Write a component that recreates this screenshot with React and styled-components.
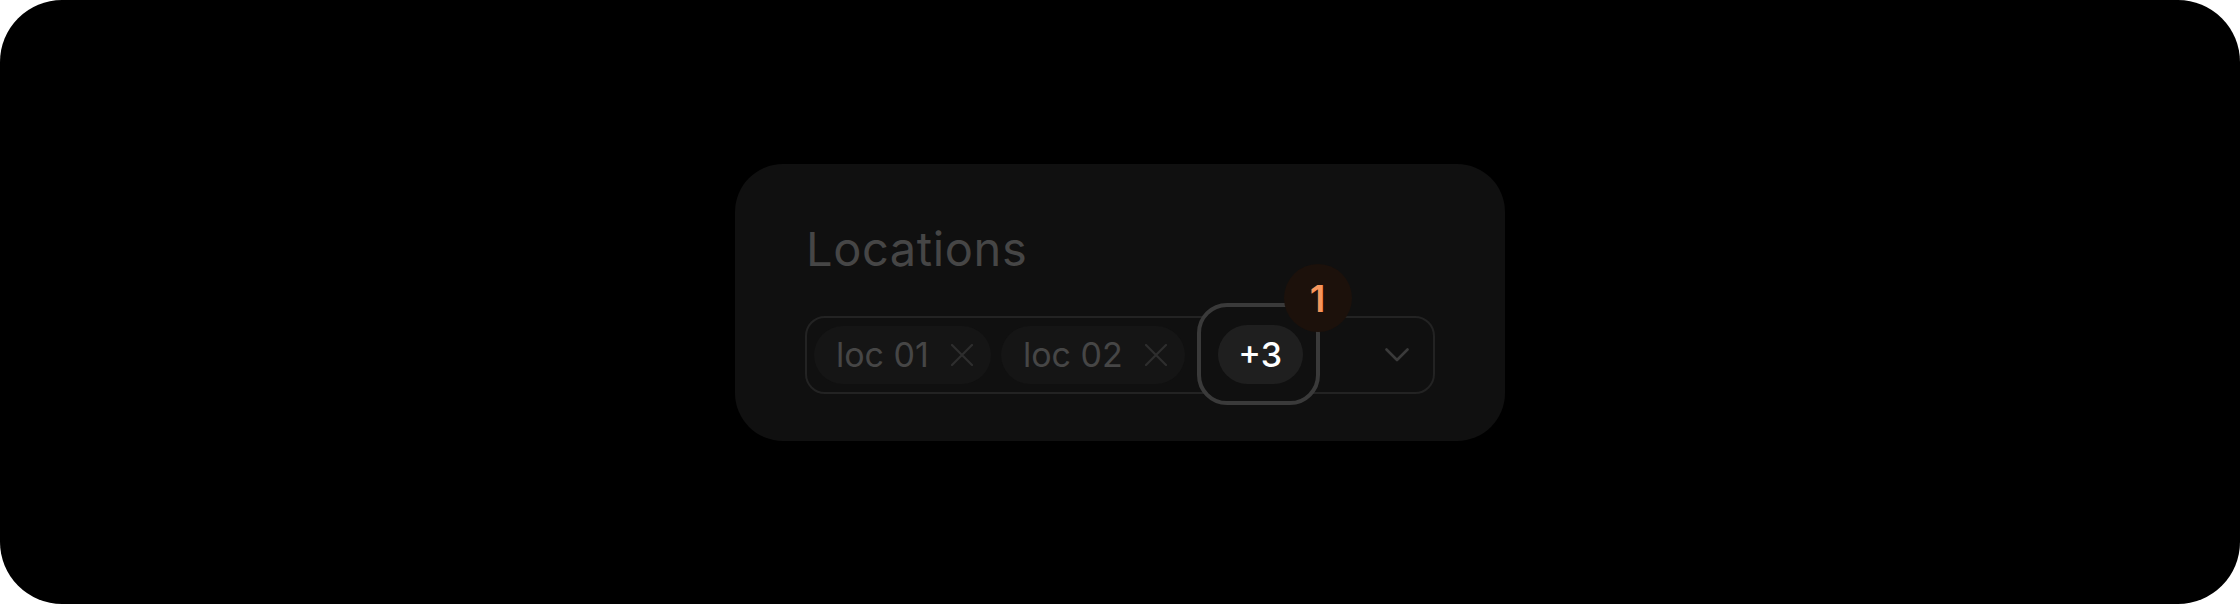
import React from "react";
import styled, { createGlobalStyle } from "styled-components";

const GlobalStyle = createGlobalStyle`
  html, body {
    margin: 0;
    padding: 0;
    background: #ffffff;
  }
  * {
    box-sizing: border-box;
  }
`;

const Frame = styled.div`
  width: 2240px;
  height: 604px;
  background: #000000;
  border-radius: 62px;
  display: flex;
  align-items: center;
  justify-content: center;
  font-family: Inter, "Liberation Sans", sans-serif;
`;

const Card = styled.div`
  width: 770px;
  background: #101010;
  border-radius: 48px;
  padding: 57px 70px 47px 70px;
  display: flex;
  flex-direction: column;
  gap: 40px;
`;

const Title = styled.h2`
  margin: 0 0 0 1px;
  font-size: 47px;
  line-height: 55px;
  font-weight: 400;
  color: #464646;
  letter-spacing: 0.6px;
`;

const Field = styled.div`
  height: 78px;
  border: 2px solid #232323;
  border-radius: 20px;
  padding: 0 24px 0 7px;
  display: flex;
  align-items: center;
  gap: 10px;
`;

const Chip = styled.div`
  height: 58px;
  border-radius: 29px;
  background: #151515;
  padding: 0 18px 0 22px;
  display: flex;
  align-items: center;
  gap: 22px;
  color: #464646;
  font-size: 34px;
  white-space: nowrap;
`;

const RemoveIcon = styled.svg`
  width: 22px;
  height: 22px;
  flex-shrink: 0;
`;

const MoreWrap = styled.div`
  position: relative;
  margin-left: 23px;
  display: flex;
`;

const FocusRing = styled.div`
  position: absolute;
  top: -22px;
  bottom: -21px;
  left: -21px;
  right: -17px;
  border: 4px solid #3a3a3a;
  border-radius: 30px;
  background: #101010;
`;

const MoreChip = styled.div`
  position: relative;
  height: 59px;
  width: 85px;
  border-radius: 30px;
  background: #1f1f1f;
  display: flex;
  align-items: center;
  justify-content: center;
  color: #ffffff;
  font-size: 34px;
  font-weight: 500;
`;

const Badge = styled.div`
  position: absolute;
  top: -61px;
  left: 66px;
  width: 68px;
  height: 68px;
  border-radius: 50%;
  background: #1c110b;
  color: #f7955b;
  font-size: 37px;
  font-weight: 600;
  display: flex;
  align-items: center;
  justify-content: center;
`;

const Chevron = styled.svg`
  margin-left: auto;
  width: 24px;
  height: 14px;
  flex-shrink: 0;
`;

const X = () => (
  <RemoveIcon viewBox="0 0 22 22" fill="none">
    <path d="M1 1L21 21M21 1L1 21" stroke="#2e2e2e" strokeWidth="2.2" strokeLinecap="round" />
  </RemoveIcon>
);

const locations = ["loc 01", "loc 02"];

const App = () => {
  return (
    <>
      <GlobalStyle />
      <Frame>
        <Card>
          <Title>Locations</Title>
          <Field>
            {locations.map((loc) => (
              <Chip key={loc}>
                {loc}
                <X />
              </Chip>
            ))}
            <MoreWrap>
              <FocusRing />
              <MoreChip>+3</MoreChip>
              <Badge>1</Badge>
            </MoreWrap>
            <Chevron viewBox="0 0 24 14" fill="none">
              <path d="M1.5 1.5L12 12L22.5 1.5" stroke="#3a3a3a" strokeWidth="2.6" strokeLinecap="round" strokeLinejoin="round" />
            </Chevron>
          </Field>
        </Card>
      </Frame>
    </>
  );
};

export default App;
